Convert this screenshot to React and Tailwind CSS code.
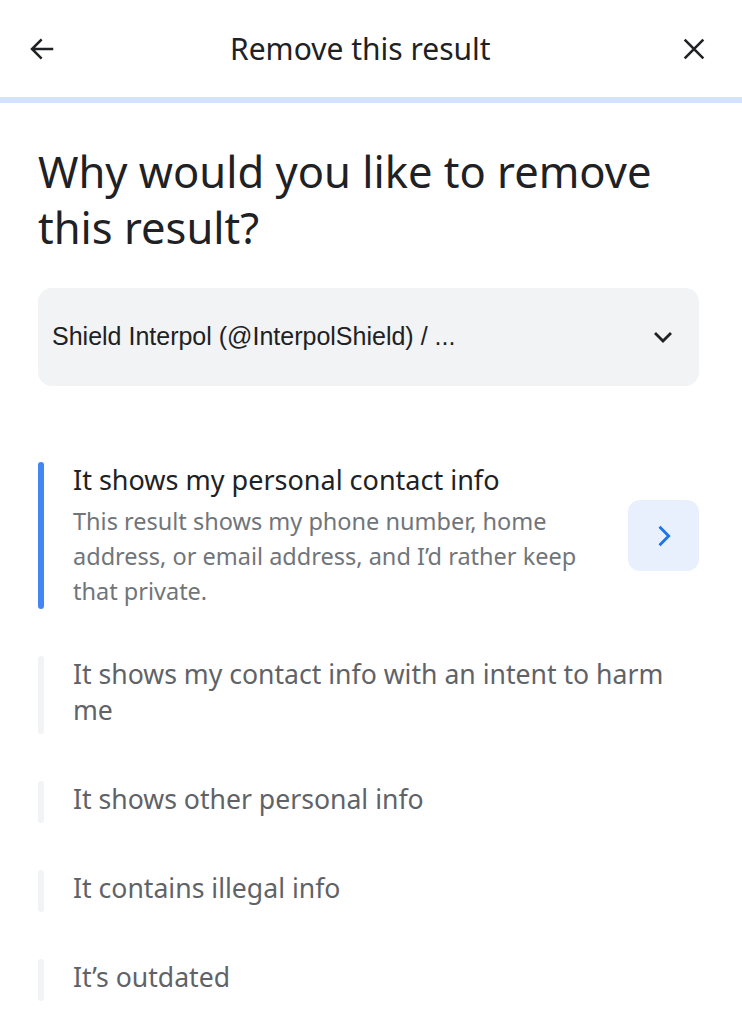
import React from 'react';

const reasons = [
  { title: 'It shows my contact info with an intent to harm me' },
  { title: 'It shows other personal info' },
  { title: 'It contains illegal info' },
  { title: 'It’s outdated' },
];

const App = () => {
  return (
    <div className="min-h-screen bg-white text-[#202124]" style={{ fontFamily: '"Noto Sans", sans-serif' }}>
      <header className="h-[97px] flex items-center pl-[27px] pr-[34px] border-b-[6px] border-[#d3e3fd] box-content">
        <svg width="30" height="30" viewBox="0 0 24 24" fill="none" stroke="#202124" strokeWidth="2" strokeLinecap="square">
          <path d="M20 12H5M11 5l-7 7 7 7" />
        </svg>
        <h1 className="ml-[173px] text-[30px] leading-none">Remove this result</h1>
        <svg className="ml-auto" width="28" height="28" viewBox="0 0 24 24" fill="none" stroke="#202124" strokeWidth="2.2">
          <path d="M4 4l16 16M20 4L4 20" />
        </svg>
      </header>

      <main className="pl-[38px] pr-[43px]">
        <h2 className="text-[43.5px] leading-[56px] mt-[40px]">
          Why would you like to remove this result?
        </h2>

        <button className="mt-[33px] w-full h-[98px] rounded-[14px] bg-[#f1f3f4] flex items-center justify-between pl-[14px] pr-[24px] text-left">
          <span className="text-[25px] text-[#202124]" style={{ fontFamily: '"Liberation Sans", Arial, sans-serif' }}>
            Shield Interpol (@InterpolShield) / ...
          </span>
          <svg width="24" height="24" viewBox="0 0 24 24" fill="none" stroke="#202124" strokeWidth="2.8" strokeLinecap="square">
            <path d="M5 9l7 7 7-7" />
          </svg>
        </button>

        <div className="mt-[76px] flex flex-col gap-[47px]">
          <div className="flex items-center">
            <div className="w-[6px] self-stretch rounded-full bg-[#4285f4] shrink-0" />
            <div className="flex-1 pl-[29px] pr-[24px]">
              <div className="text-[27px] leading-[36px] text-[#202124]">It shows my personal contact info</div>
              <p className="text-[23.5px] leading-[35px] text-[#70757a] mt-[6px]">
                This result shows my phone number, home address, or email address, and I’d rather keep that private.
              </p>
            </div>
            <button className="w-[71px] h-[71px] rounded-[12px] bg-[#e8f0fe] flex items-center justify-center shrink-0">
              <svg width="28" height="28" viewBox="0 0 24 24" fill="none" stroke="#1a73e8" strokeWidth="2.4" strokeLinecap="square">
                <path d="M9 5l7 7-7 7" />
              </svg>
            </button>
          </div>

          {reasons.map((r) => (
            <div key={r.title} className="flex">
              <div className="w-[6px] rounded-full bg-[#f1f3f4] shrink-0" />
              <div className="pl-[29px] pr-[10px] pt-0 pb-[6px] text-[26.6px] leading-[36px] text-[#5f6368]">{r.title}</div>
            </div>
          ))}
        </div>
      </main>
    </div>
  );
};

export default App;
